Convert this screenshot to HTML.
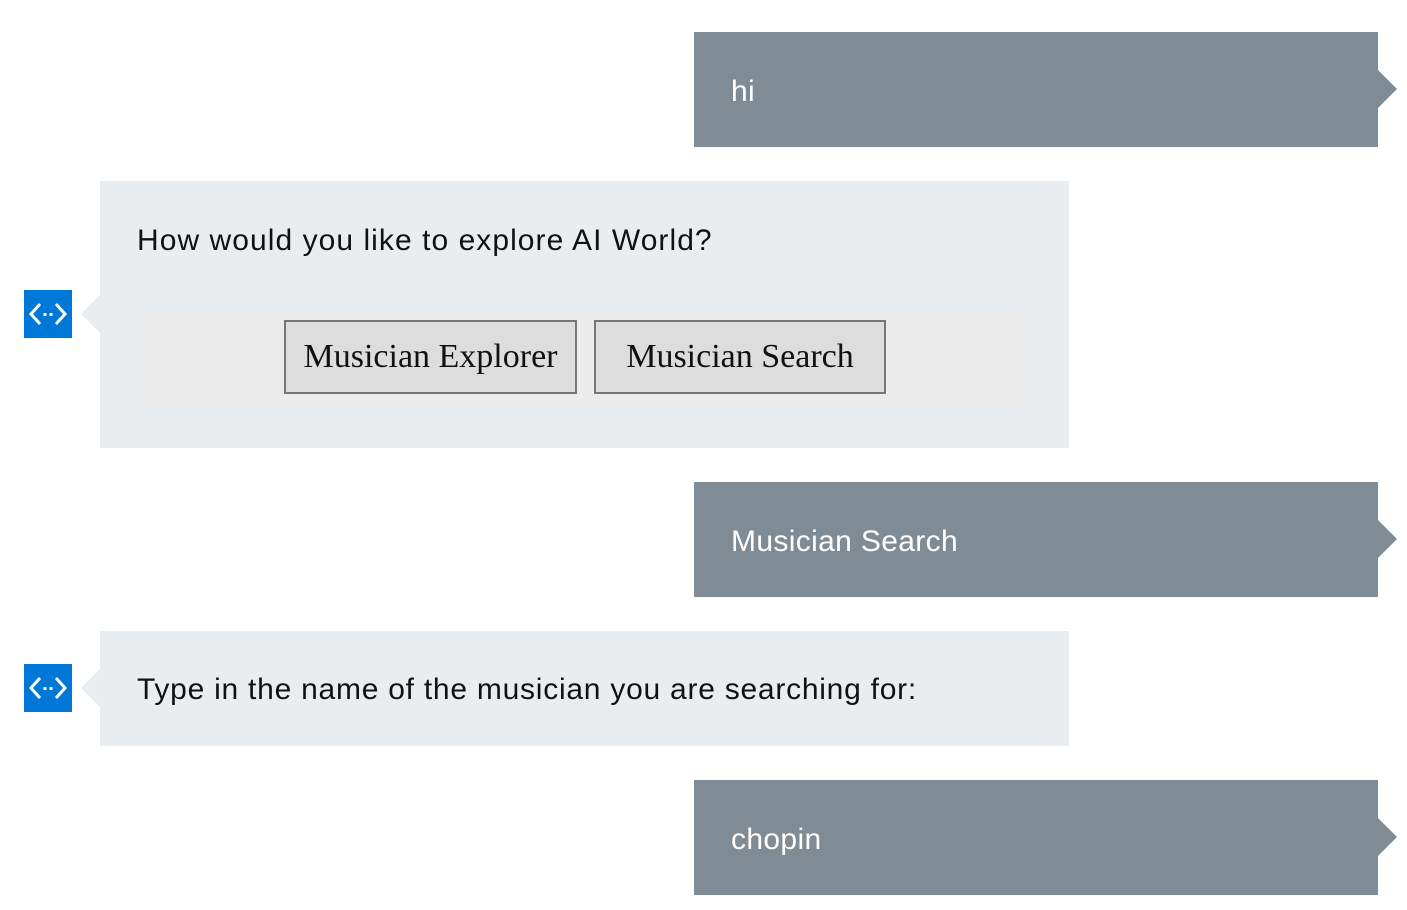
<!DOCTYPE html>
<html><head><style>
body{margin:0;width:1407px;height:910px;background:#fff;position:relative;overflow:hidden;font-family:"Liberation Sans",sans-serif}
.u{position:absolute;left:694px;width:684px;height:115px;background:#7f8c95;color:#fff;font-size:30px;letter-spacing:0.35px}
.u span{position:absolute;left:37px;top:42px;line-height:1.2}
.u:after{content:"";position:absolute;right:-19px;top:38px;border-left:19px solid #7f8c95;border-top:19px solid transparent;border-bottom:19px solid transparent}
.tri{position:absolute;left:81px;width:0;height:0;border-right:19px solid #eaedf0;border-top:19px solid transparent;border-bottom:19px solid transparent}
.ic{position:absolute;left:24px;width:48px;height:48px;background:#0078d7}
.btn{position:absolute;top:320px;height:74px;border:2px solid #767676;background:#dddddd;font-family:"Liberation Serif",serif;font-size:34px;color:#111;box-sizing:border-box;text-align:center;line-height:70px;white-space:nowrap}
.t{position:absolute;left:37px;line-height:1.2;font-size:30px;letter-spacing:1.05px;color:#111}
</style></head><body>
<div class="u" style="top:32px"><span>hi</span></div>
<div style="position:absolute;left:100px;top:181px;width:969px;height:267px;background:#eaedf0"><span class="t" style="top:42px">How would you like to explore AI World?</span></div>
<div class="tri" style="top:295px"></div>
<div style="position:absolute;left:143px;top:311px;width:883px;height:96px;background:#ececec"></div>
<div class="btn" style="left:284px;width:293px">Musician Explorer</div>
<div class="btn" style="left:594px;width:292px">Musician Search</div>
<svg class="ic" style="top:290px" viewBox="0 0 48 48"><path d="M16 14 L7 24 L16 34 M32 14 L41 24 L32 34" stroke="#fff" stroke-width="3" fill="none"/><rect x="19.5" y="23" width="3" height="3" fill="#fff"/><rect x="25.5" y="23" width="3" height="3" fill="#fff"/></svg>
<div class="u" style="top:482px"><span>Musician Search</span></div>
<div style="position:absolute;left:100px;top:631px;width:969px;height:115px;background:#eaedf0"><span class="t" style="top:41px;letter-spacing:0.75px">Type in the name of the musician you are searching for:</span></div>
<div class="tri" style="top:669px"></div>
<svg class="ic" style="top:664px" viewBox="0 0 48 48"><path d="M16 14 L7 24 L16 34 M32 14 L41 24 L32 34" stroke="#fff" stroke-width="3" fill="none"/><rect x="19.5" y="23" width="3" height="3" fill="#fff"/><rect x="25.5" y="23" width="3" height="3" fill="#fff"/></svg>
<div class="u" style="top:780px"><span>chopin</span></div>
</body></html>
